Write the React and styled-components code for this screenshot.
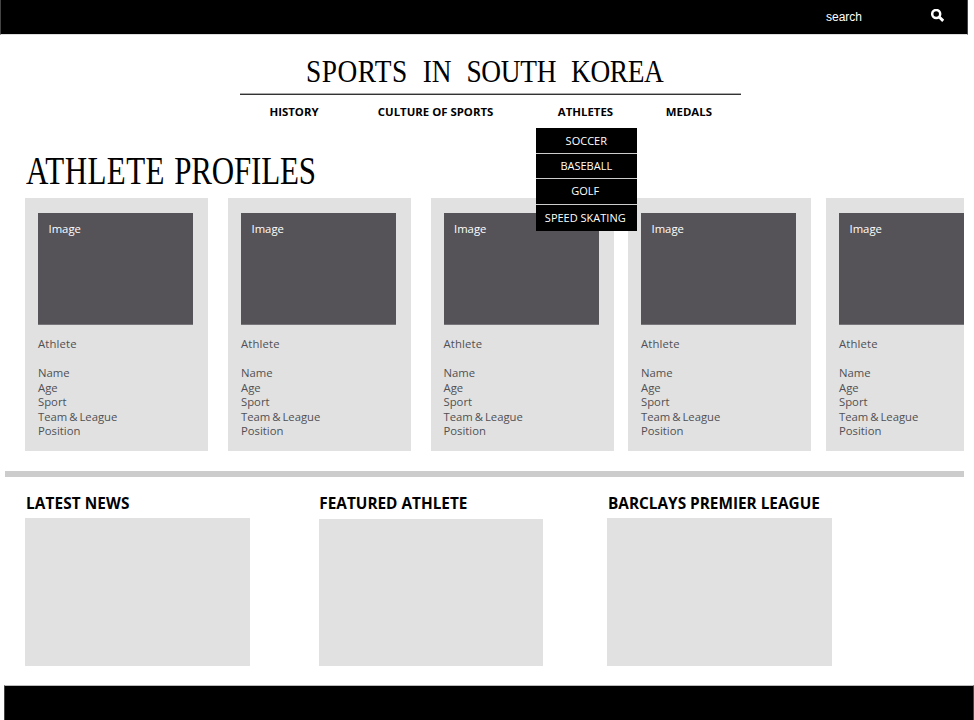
import React from 'react';
import styled, { createGlobalStyle } from 'styled-components';

const GlobalStyle = createGlobalStyle`
  * { box-sizing: border-box; }
  body { margin: 0; background: #fff; font-family: "Open Sans", sans-serif; color: #000; }
  h1, h2, h3, p, ul { margin: 0; padding: 0; font-weight: normal; }
  ul { list-style: none; }
`;

const Page = styled.div`
  width: 974px;
  height: 720px;
  overflow: hidden;
  display: flex;
  flex-direction: column;
  background: #fff;
`;

const TopBar = styled.header`
  flex: none;
  display: flex;
  justify-content: flex-end;
  width: 968px;
  height: 35px;
  padding-right: 23px;
  background: #000;
  border-left: 1px solid #444;
  border-right: 1px solid #444;
  border-bottom: 1px solid #ddd;
`;

const SearchLabel = styled.span`
  width: 105px;
  margin-top: 9px;
  font: 12px/16px "Liberation Sans", sans-serif;
  color: #fff;
`;

const SearchIcon = styled.svg`
  width: 13px;
  height: 13px;
  margin-top: 9px;
`;

const Masthead = styled.div`
  flex: none;
  width: 501px;
  height: 60px;
  margin-left: 240px;
  padding: 18px 0 0 66px;
`;

const SiteTitle = styled.h1`
  font: 32px/36px "Liberation Serif", serif;
  word-spacing: 9.4px;
  white-space: nowrap;
  transform: scaleX(0.855);
  transform-origin: 0 0;
`;

const Word = styled.span`
  letter-spacing: ${(p) => p.$spacing}px;
`;

const Rule = styled.div`
  flex: none;
  width: 501px;
  height: 2px;
  margin: -2px 0 0 240px;
  background: #333;
  border-top: 1px solid #aaa;
`;

const Nav = styled.nav`
  flex: none;
  display: grid;
  grid-template-columns: 108.3px 180px 108px auto;
  height: 51px;
  margin-left: 269.5px;
  padding-top: 8px;
  font-size: 11.4px;
  font-weight: 700;
  line-height: 18px;
`;

const NavItem = styled.div`
  position: relative;
  white-space: nowrap;
`;

const Menu = styled.ul`
  position: absolute;
  z-index: 2;
  top: 25px;
  left: -22px;
  width: 101px;
  display: flex;
  flex-direction: column;
  background: #000;
  font-size: 11px;
  font-weight: 400;
  color: #fff;
  text-align: center;
`;

const MenuItem = styled.li`
  height: ${(p) => p.$height}px;
  line-height: ${(p) => p.$line || 25}px;
  padding-right: ${(p) => p.$shift || 0}px;
  border-bottom: ${(p) => (p.$last ? '0' : '1px solid #ccc')};
`;

const PageTitle = styled.h2`
  flex: none;
  height: 52px;
  margin-left: 26px;
  padding-top: 4px;
  font: 39px/42px "Liberation Serif", serif;
  word-spacing: 2px;
  white-space: nowrap;
  transform: scaleX(0.795);
  transform-origin: 0 0;
`;

const Cards = styled.div`
  flex: none;
  display: flex;
  width: 939px;
  height: 253px;
  margin-left: 25px;
  overflow: hidden;
`;

const Card = styled.article`
  flex: none;
  width: 183px;
  margin-right: ${(p) => p.$gap}px;
  padding: 14.5px 0 0 13px;
  background: #e1e1e1;
`;

const Photo = styled.div`
  width: 155.4px;
  height: 112px;
  padding: 8px 0 0 10.5px;
  background: #555358;
  border-bottom: 1px solid #77757a;
  font-size: 11.3px;
  line-height: 16px;
  color: #fff;
`;

const CardText = styled.div`
  padding-top: 12.5px;
  font-size: 11.3px;
  line-height: 14.5px;
  word-spacing: -1px;
  color: #505054;
`;

const CardHeading = styled.h3`
  font-size: inherit;
  margin-bottom: 14.5px;
  letter-spacing: 0.15px;
`;

const Divider = styled.hr`
  flex: none;
  width: 959px;
  height: 6px;
  margin: 20px 0 0 5px;
  border: 0;
  background: #ccc;
`;

const Panels = styled.div`
  flex: none;
  display: grid;
  grid-template-columns: 294px 288px 225px;
  height: 208px;
  margin-left: 25px;
  padding-top: 16px;
`;

const PanelTitle = styled.h3`
  height: 25px;
  padding-left: ${(p) => p.$indent}px;
  font-size: 15.35px;
  font-weight: 700;
  line-height: 21px;
  letter-spacing: ${(p) => p.$spacing || 0}px;
  white-space: nowrap;
`;

const PanelBox = styled.div`
  width: ${(p) => p.$width}px;
  height: ${(p) => p.$height}px;
  margin-top: ${(p) => p.$top || 0}px;
  background: #e1e1e1;
`;

const Footer = styled.footer`
  flex: none;
  height: 36px;
  margin-left: 4px;
  background: #000;
  border: 1px solid #444;
  border-top-color: #bbb;
  border-bottom: 0;
`;

const menu = [
  { name: 'SOCCER', height: 26 },
  { name: 'BASEBALL', height: 25, line: 24 },
  { name: 'GOLF', height: 26, shift: 2, line: 24 },
  { name: 'SPEED SKATING', height: 26, shift: 2, line: 25, last: true },
];

const details = ['Name', 'Age', 'Sport', 'Team & League', 'Position'];
const cardGaps = [20, 19.5, 14.5, 15, 0];

const panels = [
  { title: 'LATEST NEWS', indent: 1, spacing: 0.1, width: 225, height: 148 },
  { title: 'FEATURED ATHLETE', indent: 0.3, spacing: 0, width: 224, height: 147, top: 0.5 },
  { title: 'BARCLAYS PREMIER LEAGUE', indent: 1, spacing: 0, width: 225, height: 148 },
];

export default function App() {
  return (
    <Page>
      <GlobalStyle />
      <TopBar>
        <SearchLabel>search</SearchLabel>
        <SearchIcon viewBox="0 0 13 13" fill="none" stroke="#fff">
          <circle cx="5.2" cy="5" r="4" strokeWidth="2.5" />
          <path d="M8.2 8 L12.2 11.8" strokeWidth="3" />
        </SearchIcon>
      </TopBar>
      <Masthead>
        <SiteTitle>
          <Word $spacing={0.6}>SPORTS</Word> <Word $spacing={0}>IN</Word>{' '}
          <Word $spacing={-0.35}>SOUTH</Word> <Word $spacing={-0.45}>KOREA</Word>
        </SiteTitle>
      </Masthead>
      <Rule />
      <Nav>
        <NavItem>HISTORY</NavItem>
        <NavItem>CULTURE OF SPORTS</NavItem>
        <NavItem>
          ATHLETES
          <Menu>
            {menu.map((m) => (
              <MenuItem key={m.name} $height={m.height} $shift={m.shift} $line={m.line} $last={m.last}>
                {m.name}
              </MenuItem>
            ))}
          </Menu>
        </NavItem>
        <NavItem>MEDALS</NavItem>
      </Nav>
      <PageTitle>
        <Word $spacing={0.5}>ATHLETE</Word> <Word $spacing={-0.2}>PROFILES</Word>
      </PageTitle>
      <Cards>
        {cardGaps.map((gap, i) => (
          <Card key={i} $gap={gap}>
            <Photo>Image</Photo>
            <CardText>
              <CardHeading>Athlete</CardHeading>
              {details.map((d) => (
                <p key={d}>{d}</p>
              ))}
            </CardText>
          </Card>
        ))}
      </Cards>
      <Divider />
      <Panels>
        {panels.map((p) => (
          <section key={p.title}>
            <PanelTitle $indent={p.indent} $spacing={p.spacing}>{p.title}</PanelTitle>
            <PanelBox $width={p.width} $height={p.height} $top={p.top} />
          </section>
        ))}
      </Panels>
      <Footer />
    </Page>
  );
}
